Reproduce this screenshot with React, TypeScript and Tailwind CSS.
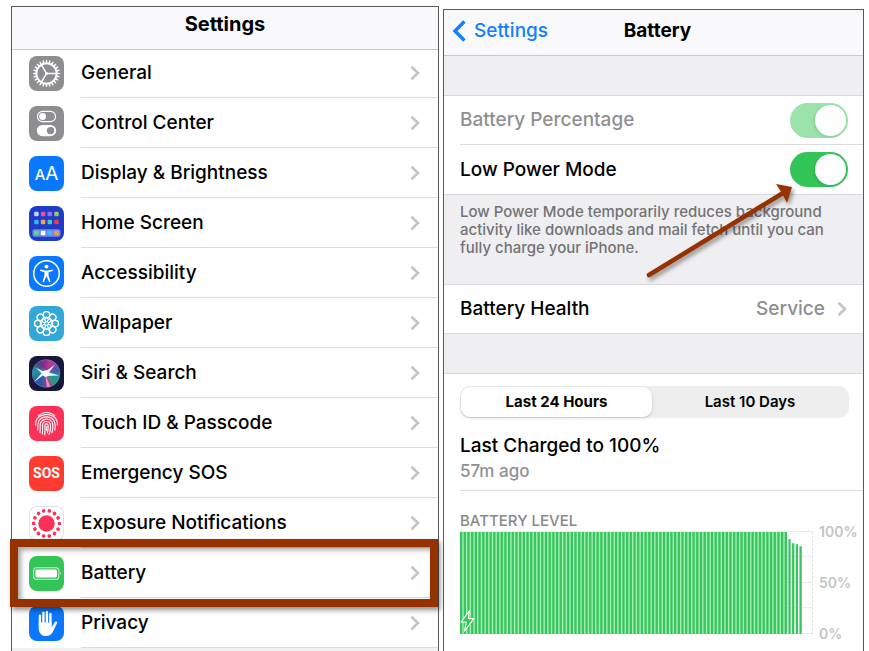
import type { ReactNode } from "react";

function Glyph({ children }: { children: ReactNode }) {
  return (
    <svg viewBox="0 0 34 34" className="size-full" fill="none" aria-hidden="true">
      {children}
    </svg>
  );
}

const around = (n: number) => Array.from({ length: n }, (_, i) => (i * 360) / n);

function GearGlyph() {
  return (
    <Glyph>
      <circle cx="17" cy="17" r="9.8" stroke="white" strokeWidth="1.8" />
      {around(24).map((a) => (
        <path key={a} d="M16 7.2 16.5 3.8H17.5L18 7.2Z" fill="white" transform={`rotate(${a} 17 17)`} />
      ))}
      {[90, 210, 330].map((a) => (
        <path key={a} d="M17 17V7.5" stroke="white" strokeWidth="1.4" transform={`rotate(${a} 17 17)`} />
      ))}
      <circle cx="17" cy="17" r="1.5" fill="white" />
    </Glyph>
  );
}

function ControlGlyph() {
  return (
    <Glyph>
      <rect x="8.2" y="5.2" width="17.6" height="10" rx="5" stroke="white" strokeWidth="1.1" />
      <circle cx="13.2" cy="10.2" r="3.3" fill="white" />
      <rect x="7.6" y="18.4" width="18.8" height="11" rx="5.5" fill="white" />
      <circle cx="20.9" cy="23.9" r="3.6" fill="#8e8e90" />
    </Glyph>
  );
}

function HomeGlyph() {
  const tiles = [
    ["#c9d3f5", "#e0529c", "#9d6bf0", "#8fcf5a"],
    ["#35b4f5", "#f3a545", "#45cdb8", "#ee3f45"],
  ];
  const dock = ["#5fd68a", "#ffffff", "#3fb9f5", "#f29b4c"];
  return (
    <Glyph>
      {tiles.map((row, r) =>
        row.map((c, i) => (
          <rect key={`${r}-${i}`} x={5 + i * 6.5} y={5.5 + r * 7.8} width="4.4" height="4.4" rx="1.2" fill={c} />
        )),
      )}
      <rect x="3.4" y="22.6" width="27.2" height="7.2" rx="1.8" fill="#6f8be8" />
      {dock.map((c, i) => (
        <rect key={c} x={5 + i * 6.5} y="24" width="4.4" height="4.4" rx="1.2" fill={c} />
      ))}
    </Glyph>
  );
}

function AccessibilityGlyph() {
  return (
    <Glyph>
      <circle cx="17" cy="17" r="12.4" stroke="white" strokeWidth="1.5" />
      <circle cx="17" cy="10.3" r="1.9" fill="white" />
      <path
        d="M11.2 13.2 15.4 14.1H18.6L22.8 13.2Q23.8 13.9 22.9 14.5L19 15.8V19L20.8 25Q20.1 26 19.5 25.3L17.2 20H16.8L14.5 25.3Q13.9 26 13.2 25L15 19V15.8L11.1 14.5Q10.2 13.9 11.2 13.2Z"
        fill="white"
      />
    </Glyph>
  );
}

function WallpaperGlyph() {
  return (
    <Glyph>
      {around(8).map((a) => (
        <circle key={a} cx="17" cy="8.6" r="3.2" stroke="white" strokeWidth="1.3" transform={`rotate(${a} 17 17)`} />
      ))}
      {around(8).map((a) => (
        <ellipse key={a} cx="17" cy="13.2" rx="1.5" ry="2.4" stroke="white" strokeWidth="0.9" transform={`rotate(${a} 17 17)`} />
      ))}
      <circle cx="17" cy="17" r="1.8" fill="#33a8d8" stroke="white" strokeWidth="1" />
    </Glyph>
  );
}

function SiriGlyph() {
  return (
    <Glyph>
      <defs>
        <filter id="siri-soft" x="-30%" y="-30%" width="160%" height="160%">
          <feGaussianBlur stdDeviation="2" />
        </filter>
        <filter id="siri-glow" x="-30%" y="-30%" width="160%" height="160%">
          <feGaussianBlur stdDeviation="0.5" />
        </filter>
        <clipPath id="siri-orb">
          <circle cx="16.6" cy="17" r="13.6" />
        </clipPath>
      </defs>
      <g clipPath="url(#siri-orb)">
        <rect width="34" height="34" fill="#2c3878" />
        <g filter="url(#siri-soft)">
          <path d="M16 17 4 0 22 0Z" fill="#7a2f8c" />
          <path d="M16 17 18 0 30 4Z" fill="#c2348c" />
          <path d="M16 17 30 4 34 19Z" fill="#4658b0" />
          <path d="M16 17 34 18 26 33Z" fill="#1d9c8c" />
          <path d="M16 17 24 34 17 34Z" fill="#b8388c" />
          <path d="M16 17 16 34 0 26Z" fill="#2f58a8" />
          <path d="M16 17 0 24 2 6Z" fill="#2390a0" />
        </g>
        <g filter="url(#siri-glow)">
          <path d="M15.5 15.5 25 8.5 19.4 16 29.5 19 18.8 19.4 13.5 19 4.5 25.5 12.2 16.8 6.5 11.5Z" fill="#d9f6ff" />
          <path d="M15.6 17 20.8 30 17.4 30.2Z" fill="#f58cc4" />
          <circle cx="16.4" cy="17" r="3.2" fill="white" />
        </g>
      </g>
      <circle cx="16.6" cy="17" r="13.4" stroke="#8b93c4" strokeOpacity="0.5" strokeWidth="0.8" />
    </Glyph>
  );
}

function FingerprintGlyph() {
  return (
    <Glyph>
      <g stroke="white" strokeWidth="1.1" strokeLinecap="round">
        <path d="M9 9.6C13.5 5.2 20.5 5.2 25 9.6" />
        <path d="M6.4 18.6C6 11.6 11 8.2 17 8.2S28 11.6 27.6 18.6" />
        <path d="M8.3 23.4C8.6 21.6 8.5 20 8.5 18.6C8.5 13.4 12.2 10.5 17 10.5S25.5 13.4 25.5 18.6C25.5 20.2 25.4 21.8 25 23.4" />
        <path d="M10.6 25.8C11.1 23.4 10.8 21 10.8 18.8C10.8 15.2 13.4 12.8 17 12.8S23.2 15.2 23.2 18.8C23.2 21.4 23 23.8 22.3 26" />
        <path d="M12.9 27.2C13.5 24.4 13.1 21.4 13.1 19C13.1 16.6 14.8 15.1 17 15.1S20.9 16.6 20.9 19C20.9 22 20.6 25 19.6 27.6" />
        <path d="M15.2 28C15.9 25.2 15.4 21.8 15.4 19.2C15.4 18.1 16 17.4 17 17.4S18.6 18.1 18.6 19.2C18.6 22 18.4 24 17.9 26.2" />
        <path d="M17 20V23.5" />
      </g>
    </Glyph>
  );
}

function ExposureGlyph() {
  return (
    <Glyph>
      <circle cx="17" cy="17" r="8" fill="#fc3158" />
      {around(14).map((a) => (
        <circle key={a} cx="17" cy="4.5" r="1.8" fill="#fc3158" transform={`rotate(${a + 13} 17 17)`} />
      ))}
    </Glyph>
  );
}

function BatteryGlyph() {
  return (
    <Glyph>
      <rect x="4.4" y="11.4" width="24.6" height="11.2" rx="3" stroke="white" strokeOpacity="0.75" strokeWidth="1" />
      <rect x="6.2" y="13.2" width="21" height="7.6" rx="1.4" fill="white" />
      <path d="M30.4 15.2Q32 17 30.4 18.8Z" fill="white" fillOpacity="0.8" />
    </Glyph>
  );
}

function HandGlyph() {
  return (
    <Glyph>
      <g stroke="white" strokeWidth="2.3" strokeLinecap="round">
        <path d="M10.6 18V9.4M14 17V6.4M17.4 17V5.8M20.8 18V7.8" />
      </g>
      <path
        d="M9.4 16H22V20.6L25 15.8C25.9 14.5 27.9 15.2 27.2 16.8L23.2 25C21.7 28 19.6 29.2 16.4 29.2C12 29.2 9.4 26 9.4 21.4Z"
        fill="white"
      />
    </Glyph>
  );
}

type Item = { label: string; tile: string; icon: ReactNode; highlighted?: boolean };

const items: Item[] = [
  { label: "General", tile: "bg-[#8e8e90]", icon: <GearGlyph /> },
  { label: "Control Center", tile: "bg-[#8e8e90]", icon: <ControlGlyph /> },
  {
    label: "Display & Brightness",
    tile: "bg-[#0a78fe]",
    icon: (
      <span className="flex items-baseline leading-none text-white">
        <span className="text-[15px]">A</span>
        <span className="text-[19px] font-normal">A</span>
      </span>
    ),
  },
  { label: "Home Screen", tile: "bg-[#1f3cc8]", icon: <HomeGlyph /> },
  { label: "Accessibility", tile: "bg-[#0a78fe]", icon: <AccessibilityGlyph /> },
  { label: "Wallpaper", tile: "bg-[#33a8d8]", icon: <WallpaperGlyph /> },
  { label: "Siri & Search", tile: "bg-[#16193c]", icon: <SiriGlyph /> },
  { label: "Touch ID & Passcode", tile: "bg-[#fc3158]", icon: <FingerprintGlyph /> },
  {
    label: "Emergency SOS",
    tile: "bg-[#fe3b30]",
    icon: <span className="font-['Liberation_Sans_Narrow','Roboto',sans-serif] text-[14px] font-bold leading-none text-white">SOS</span>,
  },
  { label: "Exposure Notifications", tile: "bg-white ring-1 ring-inset ring-[#e2e2e4]", icon: <ExposureGlyph /> },
  { label: "Battery", tile: "bg-[#34c558]", icon: <BatteryGlyph />, highlighted: true },
  { label: "Privacy", tile: "bg-[#0a78fe]", icon: <HandGlyph /> },
];

function Chevron() {
  return (
    <svg viewBox="0 0 10 16" className="h-4 w-2.5 shrink-0" fill="none" aria-hidden="true">
      <path d="M1.5 1.8 8 8 1.5 14.2" stroke="#c4c4c7" strokeWidth="2.6" />
    </svg>
  );
}

function SettingsRow({ item }: { item: Item }) {
  return (
    <li className="relative">
      <a href="#" className="flex h-[50px] items-stretch pl-[17px]">
        <span className={`my-auto flex size-[35px] shrink-0 items-center justify-center overflow-hidden rounded-lg ${item.tile}`}>
          {item.icon}
        </span>
        <span className="ml-[17px] flex flex-1 items-center justify-between border-b border-[#dcdcde] pr-[18px]">
          {item.label}
          <Chevron />
        </span>
      </a>
      {item.highlighted && (
        <span className="pointer-events-none absolute -inset-y-[9px] -left-0.5 right-0 z-10 border-8 border-[#963200] shadow-[2px_3px_5px_rgba(0,0,0,0.45),inset_3px_3px_5px_rgba(0,0,0,0.35)]" />
      )}
    </li>
  );
}

function Toggle({ id, disabled }: { id: string; disabled?: boolean }) {
  return (
    <input
      id={id}
      type="checkbox"
      role="switch"
      defaultChecked
      disabled={disabled}
      className="flex h-[35px] w-[58px] appearance-none items-center justify-end rounded-full bg-[#34c558] pr-0.5 before:size-[31px] before:rounded-full before:bg-white before:shadow-[-1px_1px_3px_rgba(0,0,0,0.12)] disabled:bg-[#9be2ab]"
    />
  );
}

const PITCH = 3.7;
const levels = Array.from({ length: 93 }, (_, i) => (i < 89 ? 100 : [93, 89, 88, 86][i - 89]));

function BatteryChart() {
  return (
    <div className="flex pr-1">
      <svg viewBox="0 0 356 104" className="h-[104px] min-w-0 flex-1" preserveAspectRatio="none" role="img" aria-label="Battery level over the last 24 hours">
        {[1, 26, 52, 77, 103].map((y) => (
          <path key={y} d={`M0 ${y - 0.5}H354`} stroke="#ececee" />
        ))}
        <path d="M353.5 1V103" stroke="#dedee0" strokeDasharray="2 2" />
        <rect y="1" width={89 * PITCH - 1.2} height="102" fill="#a2f0b3" />
        {levels.map((v, i) => (
          <rect key={i} x={i * PITCH} y={103 - v * 1.02} width="2.3" height={v * 1.02} fill="#3ac45f" />
        ))}
        <path d="M9.5 79.5 1.2 91H6.2L4.6 100 13.8 87.6H8.4Z" fill="#34c558" stroke="white" strokeWidth="1.2" strokeLinejoin="round" />
      </svg>
      <div className="flex w-11 flex-col justify-between pl-1 text-[14px] font-semibold leading-none text-[#c4c4c7]">
        <span className="-mt-1.5">100%</span>
        <span>50%</span>
        <span className="-mb-1.5">0%</span>
      </div>
    </div>
  );
}

function Arrow() {
  return (
    <svg
      viewBox="0 0 160 104"
      className="pointer-events-none absolute -top-3.5 right-[62px] h-[104px] w-40 drop-shadow-[2px_3px_2px_rgba(0,0,0,0.4)]"
      fill="none"
      aria-hidden="true"
    >
      <path d="M8 94 142 12" stroke="#963200" strokeWidth="4.6" strokeLinecap="round" />
      <path d="M151 6 135 3 141 12 146 22Z" fill="#963200" />
    </svg>
  );
}

export default function App() {
  return (
    <div className="grid h-screen grid-cols-[minmax(0,428fr)_minmax(0,421fr)] gap-x-1 overflow-hidden bg-white pl-[11px] pr-[5px] font-['Inter',sans-serif] text-[19px] font-medium leading-[30px] text-black">
      <section className="mt-1.5 border border-b-0 border-[#58585a] bg-[#f1f1f3]">
        <header className="relative z-10 flex h-[43px] items-center justify-center border-b border-[#c9c9cb] bg-[#f9f9fb] pb-2">
          <h1 className="text-[20px] font-bold">Settings</h1>
        </header>
        <ul className="-mt-0.5 bg-white">
          {items.map((item) => (
            <SettingsRow key={item.label} item={item} />
          ))}
        </ul>
      </section>

      <section className="mt-[9px] border border-b-0 border-[#58585a] bg-white">
        <header className="grid h-[46px] grid-cols-[1fr_auto_1fr] items-center border-b border-[#c9c9cb] bg-[#f9f9fb] pb-1 pl-2">
          <button type="button" className="flex items-center gap-2 text-[#147efb]">
            <svg viewBox="0 0 14 22" className="h-[22px] w-3.5" fill="none" aria-hidden="true">
              <path d="M12.4 1.5 3 11 12.4 20.5" stroke="currentColor" strokeWidth="3.4" />
            </svg>
            Settings
          </button>
          <h2 className="font-bold">Battery</h2>
        </header>
        <div className="h-10 border-b border-[#d9d9db] bg-[#efeff1]" />
        <div className="pl-4">
          <div className="flex h-[49px] items-center justify-between border-b border-[#dcdcde] pr-[15px] text-[#909092]">
            <label htmlFor="percentage">Battery Percentage</label>
            <Toggle id="percentage" disabled />
          </div>
          <div className="flex h-[49px] items-center justify-between pr-[15px]">
            <label htmlFor="low-power">Low Power Mode</label>
            <Toggle id="low-power" />
          </div>
        </div>
        <div className="relative h-[91px] border-y border-[#d9d9db] bg-[#efeff1] pl-4 pt-2">
          <p className="max-w-[380px] text-[15px] leading-[18px] text-[#737376]">
            Low Power Mode temporarily reduces background activity like downloads and mail fetch until you can fully charge your iPhone.
          </p>
          <Arrow />
        </div>
        <a href="#" className="flex h-12 items-center pl-4 pr-4">
          <span className="flex-1">Battery Health</span>
          <span className="mr-3 text-[#8e8e90]">Service</span>
          <Chevron />
        </a>
        <div className="h-[41px] border-y border-[#d9d9db] bg-[#efeff1]" />
        <div className="pl-4">
          <div className="mr-3.5 mt-3 grid h-8 grid-cols-[191fr_196fr] rounded-[10px] bg-[#eeeeef] p-px text-[15px] font-bold">
            <button type="button" aria-pressed="true" className="rounded-[9px] bg-white shadow-[0_1px_3px_rgba(0,0,0,0.2)]">
              Last 24 Hours
            </button>
            <button type="button" aria-pressed="false" className="font-semibold">
              Last 10 Days
            </button>
          </div>
          <div className="border-b border-[#dcdcde] pb-2 pt-3.5">
            <p className="leading-7">Last Charged to 100%</p>
            <p className="text-[17px] leading-[22px] text-[#909092]">57m ago</p>
          </div>
          <h3 className="pt-5 text-[15px] leading-5 text-[#88888b]">BATTERY LEVEL</h3>
          <BatteryChart />
        </div>
      </section>
    </div>
  );
}
